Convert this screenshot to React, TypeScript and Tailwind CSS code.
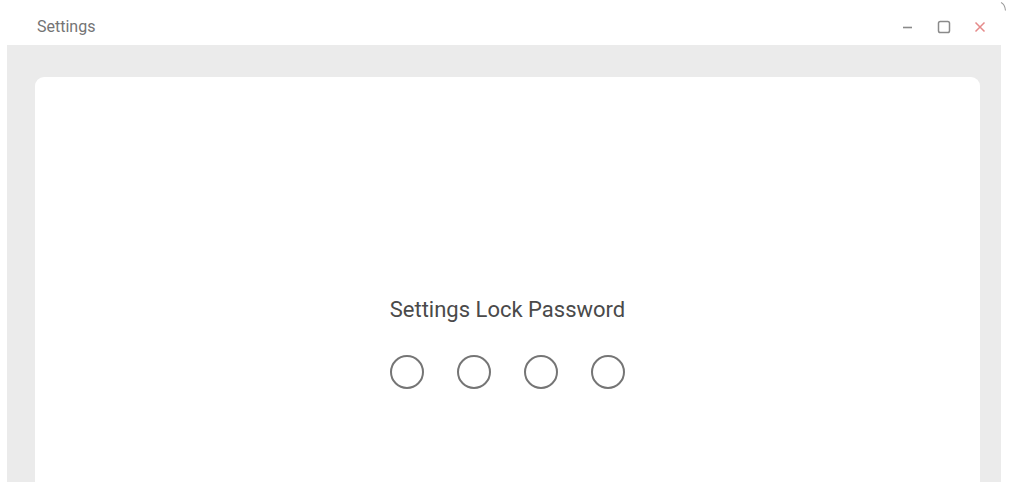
export default function App() {
  const dots = [0, 1, 2, 3];
  return (
    <div className="relative w-[1009px] h-[490px] bg-white overflow-hidden" style={{ fontFamily: 'Roboto, "Liberation Sans", sans-serif' }}>
      {/* window corner edge */}
      <svg className="absolute right-0 top-0" width="10" height="14" viewBox="0 0 10 14">
        <path d="M2 2.5c2.5 1 4 3.5 4.5 8" fill="none" stroke="#9a9a9a" strokeWidth="1.1" />
      </svg>
      <div className="ml-[7px] w-[994px] flex flex-col">
        {/* Title bar */}
        <div className="h-[45px] flex items-center justify-between pl-[30px] pr-[14px] pt-[8px]">
          <span className="text-[16px] text-[#747474]">Settings</span>
          <div className="flex items-center gap-[22px]">
            <svg width="14" height="14" viewBox="0 0 14 14">
              <path d="M2 7.5h9" stroke="#8a8a8a" strokeWidth="1.6" />
            </svg>
            <svg width="14" height="14" viewBox="0 0 14 14">
              <rect x="1.5" y="1.5" width="11" height="11" rx="1.8" fill="none" stroke="#8a8a8a" strokeWidth="1.5" />
            </svg>
            <svg width="14" height="14" viewBox="0 0 14 14">
              <path d="M2.5 2.5l9 9M11.5 2.5l-9 9" stroke="#e58a8a" strokeWidth="1.5" />
            </svg>
          </div>
        </div>

        {/* Content area */}
        <div className="h-[437px] bg-[#ebebeb] pt-[32px] pl-[28px] pr-[21px] flex flex-col">
          <div className="flex-1 bg-white rounded-t-[9px] flex flex-col items-center pt-[218px]">
            <p className="text-[22px] text-[#4a4a4a] leading-[30px]">Settings Lock Password</p>
            <div className="flex gap-[33px] mt-[30px]">
              {dots.map(i => (
                <div key={i} className="w-[34px] h-[34px] rounded-full border-2 border-[#757575]" />
              ))}
            </div>
          </div>
        </div>
      </div>
    </div>
  );
}
